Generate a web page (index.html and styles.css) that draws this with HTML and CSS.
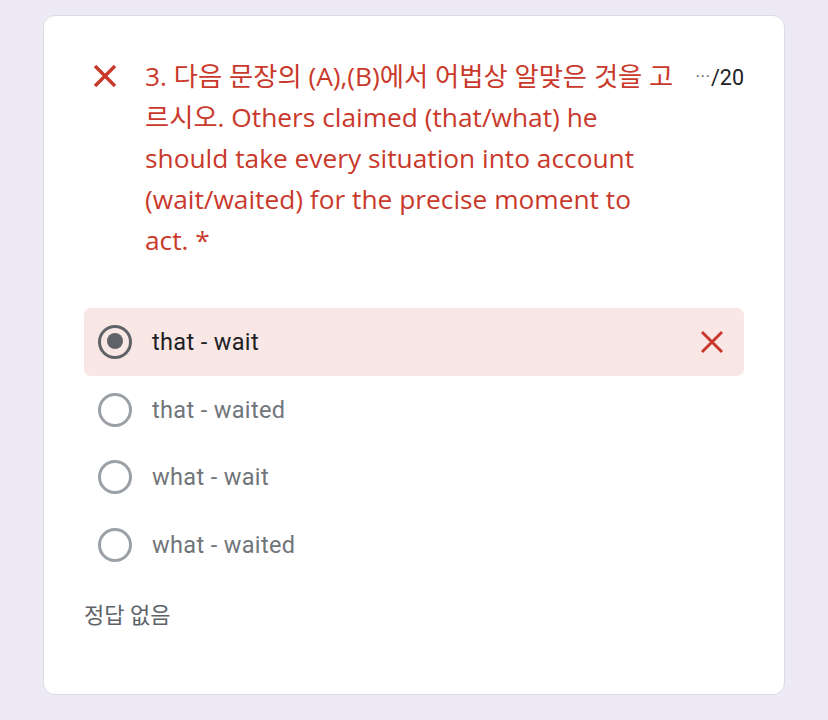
FILE: index.html
```html
<!DOCTYPE html>
<html lang="ko">
<head>
<meta charset="utf-8">
<link rel="stylesheet" href="styles.css">
</head>
<body>
<div class="card">
  <div class="header">
    <svg class="head-x" viewBox="0 0 24 24" width="24" height="24"><path d="M2 2 L22 22 M22 2 L2 22" stroke="#c9392b" stroke-width="3.4" fill="none"/></svg>
    <div class="title">3. 다음 문장의 (A),(B)에서 어법상 알맞은 것을 고<br>르시오. Others claimed (that/what) he<br>should take every situation into account<br>(wait/waited) for the precise moment to<br>act. *</div>
    <div class="score"><span class="dots">⋯</span>/20</div>
  </div>
  <div class="options">
    <div class="option wrong">
      <span class="radio checked"></span>
      <span class="label">that - wait</span>
      <svg class="opt-x" viewBox="0 0 24 24" width="24" height="24"><path d="M2 2 L22 22 M22 2 L2 22" stroke="#c9392b" stroke-width="3" fill="none"/></svg>
    </div>
    <div class="option">
      <span class="radio"></span>
      <span class="label">that - waited</span>
    </div>
    <div class="option">
      <span class="radio"></span>
      <span class="label">what - wait</span>
    </div>
    <div class="option">
      <span class="radio"></span>
      <span class="label">what - waited</span>
    </div>
  </div>
  <div class="answer">정답 없음</div>
</div>
</body>
</html>
```
FILE: styles.css
```css
html, body {
  margin: 0;
  padding: 0;
}
body {
  background: #edeaf5;
  font-family: Roboto, "Noto Sans CJK KR", sans-serif;
  padding-top: 15px;
  height: 705px;
}
.card {
  box-sizing: border-box;
  margin-left: 43px;
  width: 742px;
  height: 680px;
  background: #fff;
  border: 1px solid #dadce0;
  border-radius: 12px;
  padding: 40px 40px 0 40px;
}
.header {
  display: flex;
  align-items: flex-start;
}
.head-x {
  flex: none;
  margin: 8px 0 0 9px;
}
.title {
  flex: 1;
  margin-left: 28px;
  font-family: "Open Sans", "Noto Sans CJK KR", sans-serif;
  font-size: 26.3px;
  line-height: 41px;
  color: #c9392b;
  white-space: nowrap;
}
.score {
  flex: none;
  font-size: 21.5px;
  line-height: 41px;
  color: #202124;
}
.dots {
  font-family: "DejaVu Sans", sans-serif;
  font-size: 15px;
  color: #5f6368;
  margin-right: 1px;
  vertical-align: 4px;
}
.options {
  margin-top: 47px;
}
.option {
  display: flex;
  align-items: center;
  height: 67.7px;
  padding: 0 20px 0 14px;
  border-radius: 7px;
}
.option.wrong {
  background: #f9e7e5;
}
.radio {
  box-sizing: border-box;
  width: 34px;
  height: 34px;
  border: 3.4px solid #9aa0a6;
  border-radius: 50%;
  flex: none;
  position: relative;
}
.radio.checked {
  border-color: #5f6368;
}
.radio.checked::after {
  content: "";
  position: absolute;
  left: 5.6px;
  top: 5.6px;
  width: 16px;
  height: 16px;
  border-radius: 50%;
  background: #5f6368;
}
.label {
  flex: 1;
  margin-left: 20px;
  font-size: 23.5px;
  letter-spacing: 0.35px;
  color: #70757a;
}
.wrong .label {
  color: #202124;
}
.opt-x {
  flex: none;
}
.answer {
  margin-top: 23px;
  font-size: 22px;
  line-height: 28px;
  color: #5f6368;
}
```
